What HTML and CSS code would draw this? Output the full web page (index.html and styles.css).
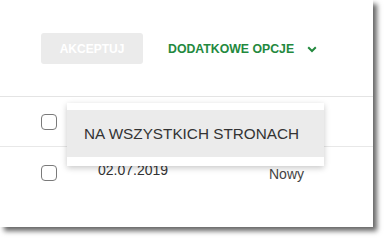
FILE: index.html
```html
<!DOCTYPE html>
<html lang="pl">
<head>
<meta charset="utf-8">
<link rel="stylesheet" href="styles.css">
</head>
<body>
<div class="panel">
  <div class="toolbar">
    <button class="btn-accept" disabled>AKCEPTUJ</button>
    <a class="more-options">DODATKOWE OPCJE
      <svg class="chevron" width="10" height="7" viewBox="0 0 10 7"><path d="M1.2 1.3 L5 5 L8.8 1.3" fill="none" stroke="currentColor" stroke-width="2"/></svg>
    </a>
  </div>
  <div class="row row-head">
    <span class="checkbox"></span>
  </div>
  <div class="row row-data">
    <span class="checkbox"></span>
    <span class="cell-date">02.07.2019</span>
    <span class="cell-status">Nowy</span>
  </div>
  <div class="dropdown">
    <div class="dropdown-item">NA WSZYSTKICH STRONACH</div>
  </div>
</div>
</body>
</html>
```

FILE: styles.css
```css
html, body {
  margin: 0;
  padding: 0;
  background: #ffffff;
}

body {
  font-family: "Liberation Sans", Arial, sans-serif;
  width: 388px;
  height: 242px;
  overflow: hidden;
}

.panel {
  position: relative;
  width: 373px;
  height: 227px;
  background: #ffffff;
  box-shadow: 4px 4px 5px rgba(0, 0, 0, 0.6);
}

.toolbar {
  height: 97px;
  box-sizing: border-box;
  border-bottom: 1px solid #e4e4e4;
  display: flex;
  align-items: center;
  padding-left: 41px;
}

.btn-accept {
  width: 102px;
  height: 31px;
  margin-top: 1px;
  border: none;
  border-radius: 3px;
  background: #ebebeb;
  color: #ffffff;
  font-family: "Liberation Sans", Arial, sans-serif;
  font-weight: bold;
  font-size: 12px;
  padding: 0;
}

.more-options {
  margin-left: 25px;
  margin-top: 1px;
  display: flex;
  align-items: center;
  color: #23893e;
  font-weight: bold;
  font-size: 12.3px;
}

.chevron {
  margin-left: 13px;
  margin-top: 1px;
}

.row {
  display: grid;
  grid-template-columns: 57px 171px auto;
  padding-left: 41px;
  box-sizing: border-box;
  border-bottom: 1px solid #e8e8e8;
}

.row-head {
  height: 50px;
  padding-top: 17px;
}

.row-data {
  height: 79px;
  padding-top: 18px;
  border-bottom: none;
}

.checkbox {
  width: 16px;
  height: 16px;
  box-sizing: border-box;
  border: 1px solid #7a7a7a;
  border-radius: 4px;
  background: #fff;
}

.cell-date {
  font-size: 14px;
  line-height: 16px;
  color: #333333;
  margin-top: -3px;
}

.cell-status {
  font-size: 14px;
  line-height: 16px;
  color: #444444;
  margin-top: 1px;
}

.dropdown {
  position: absolute;
  left: 67px;
  top: 103px;
  width: 257px;
  box-sizing: border-box;
  padding: 7px 0 9px;
  background: #ffffff;
  box-shadow: 0 2px 6px rgba(0, 0, 0, 0.22);
}

.dropdown-item {
  height: 47px;
  display: flex;
  align-items: center;
  padding-left: 17px;
  background: #ebebeb;
  color: #333333;
  font-size: 15.3px;
}
```
